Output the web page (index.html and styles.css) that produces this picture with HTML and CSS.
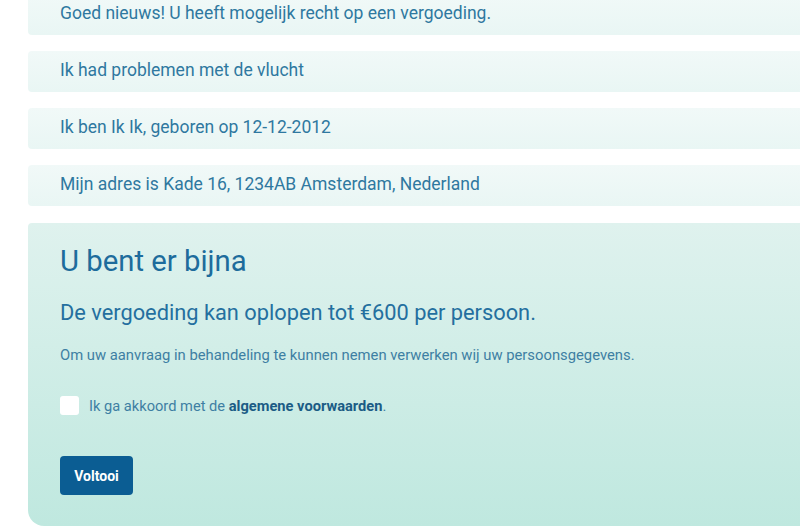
FILE: index.html
```html
<!DOCTYPE html>
<html lang="nl">
<head>
<meta charset="utf-8">
<title>Claim</title>
<link rel="stylesheet" href="styles.css">
</head>
<body>
<main class="page">
  <div class="summary">
    <div class="row">Goed nieuws! U heeft mogelijk recht op een vergoeding.</div>
    <div class="row">Ik had problemen met de vlucht</div>
    <div class="row">Ik ben Ik Ik, geboren op 12-12-2012</div>
    <div class="row">Mijn adres is Kade 16, 1234AB Amsterdam, Nederland</div>
  </div>
  <section class="final">
    <h1 class="final-title">U bent er bijna</h1>
    <p class="final-lead">De vergoeding kan oplopen tot €600 per persoon.</p>
    <p class="final-note">Om uw aanvraag in behandeling te kunnen nemen verwerken wij uw persoonsgegevens.</p>
    <label class="agree">
      <span class="box"></span>
      <span class="agree-text">Ik ga akkoord met de <a class="terms" href="#">algemene voorwaarden</a>.</span>
    </label>
    <button class="submit" type="button">Voltooi</button>
  </section>
</main>
</body>
</html>
```

FILE: styles.css
```css
html, body {
  margin: 0;
  padding: 0;
  background: #ffffff;
  overflow: hidden;
}
body {
  font-family: Roboto, "Liberation Sans", sans-serif;
  color: #2d77a0;
}
.page {
  padding-left: 28px;
  margin-top: -6px;
  margin-right: -40px;
}
.summary {
  display: flex;
  flex-direction: column;
  gap: 16px;
}
.row {
  height: 41px;
  box-sizing: border-box;
  display: flex;
  align-items: center;
  padding-left: 32px;
  padding-bottom: 3px;
  font-size: 17.5px;
  color: #2f78a0;
  background: linear-gradient(180deg, #f1f9f8 0%, #e9f6f4 100%);
  border-radius: 4px;
}
.final {
  margin-top: 17px;
  height: 303px;
  box-sizing: border-box;
  padding: 20px 32px 0;
  border-radius: 4px 0 0 16px;
  background: linear-gradient(180deg, #dff2ee 0%, #bfe8df 100%);
}
.final-title {
  margin: 0;
  font-size: 29.3px;
  font-weight: 400;
  color: #1d6c9c;
  line-height: 36px;
}
.final-lead {
  margin: 20px 0 0;
  font-size: 21.8px;
  line-height: 28px;
  color: #246f9f;
}
.final-note {
  margin: 18px 0 0;
  font-size: 14.8px;
  line-height: 20px;
  color: #3e7fa3;
}
.agree {
  margin-top: 31px;
  display: flex;
  align-items: center;
  gap: 10px;
  font-size: 14.65px;
  color: #3e7fa3;
}
.box {
  width: 19px;
  height: 19px;
  border-radius: 3px;
  background: #ffffff;
  flex: none;
}
.terms {
  color: #1b5c85;
  font-weight: 700;
  text-decoration: none;
}
.submit {
  display: block;
  margin-top: 41px;
  width: 73px;
  height: 39px;
  border: 0;
  border-radius: 4px;
  background: #0b5d93;
  color: #ffffff;
  font-family: inherit;
  font-size: 14px;
  font-weight: 700;
  padding: 0;
}
```
